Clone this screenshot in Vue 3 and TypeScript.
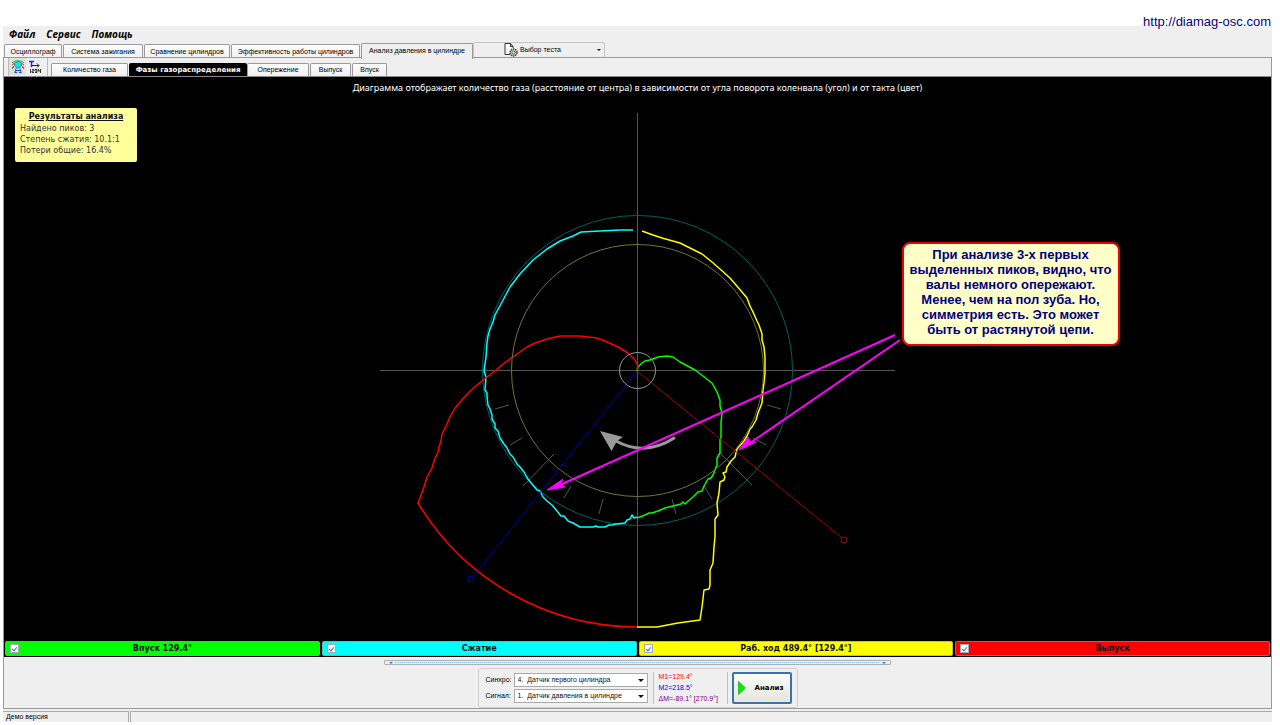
<script setup lang="ts">
import { ref } from 'vue'

interface Stage {
  id: string
  label: string
  on: boolean
}

const menu: string[] = ['Файл', 'Сервис', 'Помощь']
const mainTabs: string[] = [
  'Осциллограф',
  'Система зажигания',
  'Сравнение цилиндров',
  'Эффективность работы цилиндров',
  'Анализ давления в цилиндре',
]
const subTabs: string[] = ['Количество газа', 'Фазы газораспределения', 'Опережение', 'Выпуск', 'Впуск']
const mainTab = ref(4)
const subTab = ref(1)
const sync = ref('4')
const signal = ref('1')

const stages = ref<Stage[]>([
  { id: 'intake', label: 'Впуск 129.4°', on: true },
  { id: 'compression', label: 'Сжатие', on: true },
  { id: 'power', label: 'Раб. ход 489.4° [129.4°]', on: true },
  { id: 'exhaust', label: 'Выпуск', on: true },
])

const results: string[] = ['Найдено пиков: 3', 'Степень сжатия: 10.1:1', 'Потери общие: 16.4%']

const note: string[] = [
  'При анализе 3-х первых',
  'выделенных пиков, видно, что',
  'валы немного опережают.',
  'Менее, чем на пол зуба. Но,',
  'симметрия есть. Это может',
  'быть от растянутой цепи.',
]

const ticks: number[][] = [
  [495, 409, 509, 405],
  [510, 445, 522, 438],
  [523, 486, 554, 454],
  [564, 498, 571, 486],
  [599, 514, 603, 499],
  [767, 405, 781, 409],
  [753, 438, 766, 445],
  [721, 454, 752, 485],
  [704, 486, 712, 499],
  [672, 499, 676, 514],
]

const curves: { id: string; points: string }[] = [
  {
    id: 'compression',
    points:
      '633,230 620,230 600,231 581,232 573,236 560,241 547,249 533,260 520,274 510,287 502,302 495,315 493,322 490,329 488,336 487,343 486,357 484,371 486,377 485,390 487,393 487,397 488,405 490,409 492,415 492,419 495,424 495,428 498,431 500,438 504,444 507,448 510,454 513,457 517,464 520,467 524,472 528,479 532,484 537,490 540,491 543,497 547,501 552,505 557,511 561,516 564,516 568,521 573,523 580,527 593,527 596,526 598,527 605,527 609,525 612,525 616,524 625,523 627,520 630,519 632,515 634,518 637,517',
  },
  {
    id: 'intake',
    points:
      '637,371 638,367 642,363 645,361 650,360 658,357 667,356 673,357 680,362 695,370 703,376 712,383 717,392 720,400 720,406 722,413 721,423 721,437 720,440 720,453 717,458 717,465 715,470 713,475 711,478 708,479 704,486 702,491 698,492 693,497 687,502 685,504 683,502 681,504 673,506 665,508 658,511 655,512 652,513 649,513 645,515 637,518',
  },
  {
    id: 'power',
    points:
      '642,231 653,235 662,238 680,243 692,249 702,254 712,262 720,269 730,278 742,292 747,298 750,306 753,312 757,321 759,325 762,334 762,340 764,347 765,357 765,373 764,383 763,390 762,403 758,413 756,420 752,427 750,429 747,436 744,441 737,449 735,457 731,461 727,467 726,472 723,473 725,477 724,480 720,482 719,493 717,503 718,515 715,519 715,537 714,547 713,563 710,570 710,585 709,589 704,590 702,607 700,620 678,623 657,627 637,627',
  },
]
</script>

<template>
  <div class="page">
    <header class="site"><a href="http://diamag-osc.com">http://diamag-osc.com</a></header>
    <main class="app">
      <nav class="menu">
        <button v-for="m in menu" :key="m" type="button">{{ m }}</button>
      </nav>

      <div class="tabs">
        <button
          v-for="(t, i) in mainTabs"
          :key="t"
          type="button"
          class="tab"
          :class="{ current: mainTab === i }"
          @click="mainTab = i"
        >
          {{ t }}
        </button>
        <button type="button" class="pick" aria-haspopup="menu">
          <svg class="doc" viewBox="0 0 14 14" aria-hidden="true">
            <path d="M6 11.500H1V.5h5.500L9 3.500V5M6.500.5v3H9" fill="#fff" stroke="#333" />
            <circle cx="9.500" cy="9.500" r="3.500" fill="#b9ccb7" stroke="#39483a" stroke-dasharray="1.500 .7" stroke-width="1.400" />
            <circle cx="9.500" cy="9.500" r="1.500" fill="#eef4ee" stroke="#39483a" stroke-width=".8" />
          </svg>
          <span>Выбор теста</span>
          <i class="caret"></i>
        </button>
      </div>

      <section class="panel">
        <div class="subbar">
          <div class="tools">
            <button type="button" class="tool pressed" aria-label="Диаграмма">
              <svg viewBox="0 0 14 14" aria-hidden="true">
                <path d="M1 5 4 3M1 8l2-2M13 5l-3-2M13 8l-2-2" stroke="#e33" fill="none" />
                <path d="M1 3C4 0 10 0 13 3M1 9l2-2M13 9l-2-2" stroke="#2aa84a" fill="none" />
                <path d="M3 3.500C4 1 10 1 11 3.500L10 6 8.500 8h-3L4 6z" fill="#18dede" stroke="#159e8e" />
                <path d="M5 8.500 4 12.500M9 8.500l1 4M3.500 12.500h2.500M8 12.500h2.500M5 10.500h4" stroke="#1746e0" fill="none" />
              </svg>
            </button>
            <button type="button" class="tool" aria-label="Порядок цилиндров">
              <svg viewBox="0 0 14 14" aria-hidden="true">
                <path d="M1 1.500h5M3.500 1.500V7" stroke="#22f" stroke-width="1.500" fill="none" />
                <path d="M4 5.500h7M9 3.500l2 2-2 2" stroke="#222" fill="none" />
                <path d="M2.500 9v4M4 9.500h2v1.500H4v1.500h2M7 9.500h2v3H7M7 11h2M10.500 9v2h2M12.500 9v4" stroke="#222" fill="none" stroke-width=".9" />
              </svg>
            </button>
          </div>
          <div class="subtabs">
            <button
              v-for="(t, i) in subTabs"
              :key="t"
              type="button"
              class="tab"
              :class="{ dark: subTab === i }"
              @click="subTab = i"
            >
              {{ t }}
            </button>
          </div>
        </div>

        <div class="stage">
          <svg class="plot" viewBox="4 77 1267 564" role="img" aria-label="Диаграмма фаз газораспределения">
            <g fill="none">
              <path class="axis" d="M380 370.500H895M637.500 113V627" />
              <line v-for="(t, i) in ticks" :key="i" class="tick" :x1="t[0]" :y1="t[1]" :x2="t[2]" :y2="t[3]" />
              <circle class="outer" cx="637.500" cy="370.500" r="155" />
              <polyline v-for="c in curves" :key="c.id" class="curve" :class="c.id" :points="c.points" />
              <path
                class="curve exhaust"
                d="M637 370 638 366 635 360 628 353 618 347 605 341 597 338 580 336 560 336 547 339 535 343 527 347 517 354 503 364 495 371 483 380 470 391 461 401 455 408 450 417 446 426 442 434 441 441 439 447 438 452 435 458 432 468 427 477 423 490 418 503A256 256 0 0 0 637 627"
              />
              <circle class="inner" cx="637.500" cy="370.500" r="126" />
              <path class="m2" d="M637 371 473 577" />
              <circle class="m2" cx="471" cy="579" r="3" />
              <path class="m1" d="M637 371 842 538" />
              <circle class="m1" cx="844" cy="540" r="3" />
              <circle class="hub" cx="637.500" cy="370.500" r="18" />
              <path class="turn" d="M616 441Q645 457 675 437.500" />
            </g>
            <path class="turnhead" d="M600 431 623 437 617 441 611.500 451z" />
            <path class="pointer" d="M895 335 560 485M900 340 750 443" />
            <path class="head" d="M547 490 563 479 560 485 565 487zM739 450 748 437 751 443 756 442z" />
          </svg>
          <h1 class="caption">
            Диаграмма отображает количество газа (расстояние от центра) в зависимости от угла поворота коленвала (угол) и
            от такта (цвет)
          </h1>
          <aside class="results">
            <h2>Результаты анализа</h2>
            <p v-for="r in results" :key="r">{{ r }}</p>
          </aside>
          <aside class="note">
            <p v-for="n in note" :key="n">{{ n }}</p>
          </aside>
        </div>

        <div class="legend">
          <label v-for="s in stages" :key="s.id" :class="s.id">
            <input v-model="s.on" type="checkbox" />
            <span>{{ s.label }}</span>
          </label>
        </div>

        <div class="lower">
          <div class="splitter"><i></i><b></b><i></i></div>
          <form class="controls" @submit.prevent>
            <div class="fields">
              <label for="sync">Синхро:</label>
              <span class="combo">
                <select id="sync" v-model="sync">
                  <option value="4">4.&nbsp; Датчик первого цилиндра</option>
                </select>
              </span>
              <label for="signal">Сигнал:</label>
              <span class="combo">
                <select id="signal" v-model="signal">
                  <option value="1">1.&nbsp; Датчик давления в цилиндре</option>
                </select>
              </span>
            </div>
            <div class="marks">
              <span class="r">M1=129.4°</span>
              <span class="b">M2=218.5°</span>
              <span class="p">ΔM=-89.1° [270.9°]</span>
            </div>
            <button type="submit" class="run">
              <svg viewBox="0 0 8 14" aria-hidden="true"><path d="M.5.5 7.500 7 .5 13.500z" fill="#0e0" stroke="#3b3" /></svg>
              <span>Анализ</span>
            </button>
          </form>
        </div>
      </section>

      <footer class="status">
        <span>Демо версия</span>
        <span></span>
      </footer>
    </main>
  </div>
</template>

<style>
body {
  margin: 0;
  background: #fff;
}
</style>

<style scoped>
.page {
  min-height: 100vh;
  box-sizing: border-box;
  padding: 0 8px 3px 3px;
  display: flex;
  flex-direction: column;
  font: 7px/10px 'Liberation Sans', Arial, sans-serif;
  color: #000;
}
button {
  font: inherit;
  color: inherit;
  padding: 0;
  margin: 0;
  border: 0;
  background: none;
  white-space: nowrap;
}
h1,
h2,
p {
  margin: 0;
}
.site {
  position: relative;
  z-index: 1;
  height: 26px;
  padding: 14px 1px 0 0;
  box-sizing: border-box;
  text-align: right;
  font: 13px/16px 'Liberation Sans', Arial, sans-serif;
}
.site a {
  color: #000080;
  text-decoration: none;
}
.app {
  flex: 1;
  display: flex;
  flex-direction: column;
  background: #efefef;
}
.menu {
  height: 16px;
  display: flex;
  gap: 11px;
  padding-left: 6px;
  font: italic bold 10px/16px 'Open Sans', 'Noto Sans', sans-serif;
}
.tabs {
  display: grid;
  grid-template-columns: 59px 81px 87px 130px 112px 132px;
  height: 15px;
  padding-left: 1px;
  align-items: end;
}
.tab {
  height: 14px;
  margin-right: 1px;
  border: 1px solid #9a9a9a;
  border-bottom: 0;
  border-radius: 2px 2px 0 0;
  background: linear-gradient(#fdfdfd, #f0f0f0);
}
.tabs .current {
  height: 16px;
  margin: 0 0 -1px;
  padding-bottom: 2px;
  background: #efefef;
  position: relative;
}
.pick {
  height: 16px;
  border: 1px solid #c4c4c4;
  border-radius: 2px;
  display: flex;
  align-items: center;
  padding: 0 3px 0 30px;
}
.doc {
  width: 14px;
  height: 14px;
  margin-right: 2px;
}
.caret {
  margin-left: auto;
  border: 2px solid transparent;
  border-top-color: #111;
  border-bottom: 0;
}
.panel {
  flex: 1;
  display: flex;
  flex-direction: column;
  border: 1px solid #9a9a9a;
}
.subbar {
  height: 18px;
  display: flex;
  align-items: flex-end;
  border-bottom: 1px solid #888;
}
.tools {
  height: 18px;
  width: 38px;
  margin: 0 3px 0 4px;
  border-right: 1px solid #bbb;
  border-left: 1px solid #bbb;
  display: flex;
}
.tool {
  width: 17px;
  height: 17px;
}
.tool svg {
  width: 14px;
  height: 14px;
  display: block;
  margin: auto;
}
.pressed {
  background: #e0e0e0;
}
.subtabs {
  display: grid;
  grid-template-columns: 78px 118px 63px 42px 36px;
  align-items: end;
}
.subtabs .tab {
  height: 13px;
}
.subtabs .dark {
  margin: 0;
  border: 0;
  background: #000;
  color: #fff;
  font: bold 7px/10px 'DejaVu Sans', Verdana, sans-serif;
}
.stage {
  flex: 1;
  position: relative;
  min-height: 0;
  background: #000;
}
.plot {
  position: absolute;
  inset: 0;
  width: 100%;
  height: 100%;
}
.caption {
  position: relative;
  padding-top: 5px;
  text-align: center;
  color: #fff;
  font: 9px/12px 'Noto Sans', Verdana, sans-serif;
}
.results {
  position: absolute;
  left: 11px;
  top: 31px;
  width: 122px;
  height: 54px;
  box-sizing: border-box;
  padding: 3px 5px;
  border-radius: 2px;
  background: #ff9;
  color: #333;
  font: 8px/11px 'DejaVu Sans', Verdana, sans-serif;
}
.results h2 {
  margin-bottom: 1px;
  text-align: center;
  text-decoration: underline;
  color: #111;
  font-size: 8px;
}
.note {
  position: absolute;
  left: calc(50% + 264px);
  top: 165px;
  width: 218px;
  box-sizing: border-box;
  padding: 3px 0 7px;
  border: 2px solid #e00;
  border-radius: 8px;
  background: #ffffc8;
  color: #000080;
  text-align: center;
  font: bold 13px/15px 'Liberation Sans', Arial, sans-serif;
  white-space: nowrap;
}
.axis {
  stroke: #555;
}
.tick {
  stroke: #555;
}
.outer {
  stroke: #006060;
}
.inner {
  stroke: #747434;
}
.hub {
  stroke: #999;
}
.curve {
  stroke-width: 1.5;
  stroke-linejoin: round;
}
.curve.intake {
  stroke: #0f0;
}
.curve.compression {
  stroke: #0ff;
}
.curve.power {
  stroke: #ff0;
}
.curve.exhaust {
  stroke: #f00;
}
.m1 {
  stroke: #a80000;
}
.m2 {
  stroke: #0000b8;
}
.turn {
  stroke: #999;
  stroke-width: 3;
}
.turnhead {
  fill: #999;
}
.pointer {
  stroke: #f0f;
  stroke-width: 2;
  fill: none;
}
.head {
  fill: #f0f;
  stroke: #f0f;
}
.legend {
  display: grid;
  grid-template-columns: repeat(4, 1fr);
  gap: 2px;
  padding: 0 1px 1px;
  background: #000;
}
.legend label {
  display: grid;
  grid-template-columns: 10px 1fr 10px;
  align-items: center;
  height: 15px;
  box-sizing: border-box;
  padding: 0 4px;
  border: 1px solid rgba(150, 150, 150, 0.6);
  border-radius: 2px;
  text-align: center;
  color: #111;
  font: bold 8px/12px 'DejaVu Sans', Verdana, sans-serif;
}
.legend .intake {
  background: #0f0;
}
.legend .compression {
  background: #0ff;
}
.legend .power {
  background: #ff0;
}
.legend .exhaust {
  background: #f00;
}
.legend input {
  appearance: none;
  width: 9px;
  height: 9px;
  margin: 0;
  border: 1px solid #aaa;
  background: #fff;
  display: grid;
  place-items: center;
}
.legend input:checked::before {
  content: '';
  width: 2px;
  height: 4px;
  border: solid #1c7ce0;
  border-width: 0 1px 1px 0;
  transform: rotate(40deg);
}
.lower {
  height: 51px;
  display: flex;
  flex-direction: column;
  align-items: center;
}
.splitter {
  width: 40%;
  height: 5px;
  box-sizing: border-box;
  margin: 3px 0;
  padding: 0 4px;
  border: 1px solid #b0b0b0;
  border-radius: 1px;
  display: flex;
  align-items: center;
  gap: 3px;
}
.splitter b {
  flex: 1;
  border-top: 1px dotted #7ab8f0;
}
.splitter i {
  border: 2px solid transparent;
  border-top-color: #1c7ce0;
  border-bottom: 0;
}
.controls {
  height: 40px;
  box-sizing: border-box;
  padding: 0 5px 0 7px;
  border: 1px solid #d0d0d0;
  border-radius: 3px;
  display: flex;
  align-items: center;
}
.fields {
  display: grid;
  grid-template-columns: 28px 134px;
  gap: 2px 0;
  align-items: center;
}
.combo {
  position: relative;
  display: block;
  height: 14px;
}
.combo::after {
  content: '';
  position: absolute;
  right: 4px;
  top: 6px;
  border: 3px solid transparent;
  border-top-color: #111;
  border-bottom: 0;
  pointer-events: none;
}
.combo select {
  appearance: none;
  display: block;
  width: 100%;
  height: 14px;
  box-sizing: border-box;
  padding: 0 12px 0 3px;
  border: 1px solid #aaa;
  border-radius: 0;
  background: #fff;
  color: #111;
  font: inherit;
}
.marks {
  height: 32px;
  width: 68px;
  margin: 0 4px 0 5px;
  padding-left: 5px;
  border: solid #c0c0c0;
  border-width: 0 1px;
  display: flex;
  flex-direction: column;
  justify-content: space-around;
  white-space: nowrap;
}
.r {
  color: #f00;
}
.b {
  color: #00f;
}
.p {
  color: #800080;
}
.run {
  width: 60px;
  height: 32px;
  box-sizing: border-box;
  border: 2px solid #3a73b0;
  border-radius: 2px;
  background: linear-gradient(#fbfbf8, #e6e6de);
  display: flex;
  align-items: center;
  padding-left: 4px;
  gap: 9px;
  font: bold 7px/10px 'DejaVu Sans', Verdana, sans-serif;
}
.run svg {
  width: 8px;
  height: 14px;
}
.status {
  height: 11px;
  margin-top: 2px;
  display: grid;
  grid-template-columns: 126px 1fr;
  gap: 1px;
}
.status span {
  border-top: 1px solid #aaa;
  border-right: 1px solid #aaa;
  padding-left: 3px;
}
.status span + span {
  border-left: 1px solid #aaa;
  border-right: 0;
}
</style>
